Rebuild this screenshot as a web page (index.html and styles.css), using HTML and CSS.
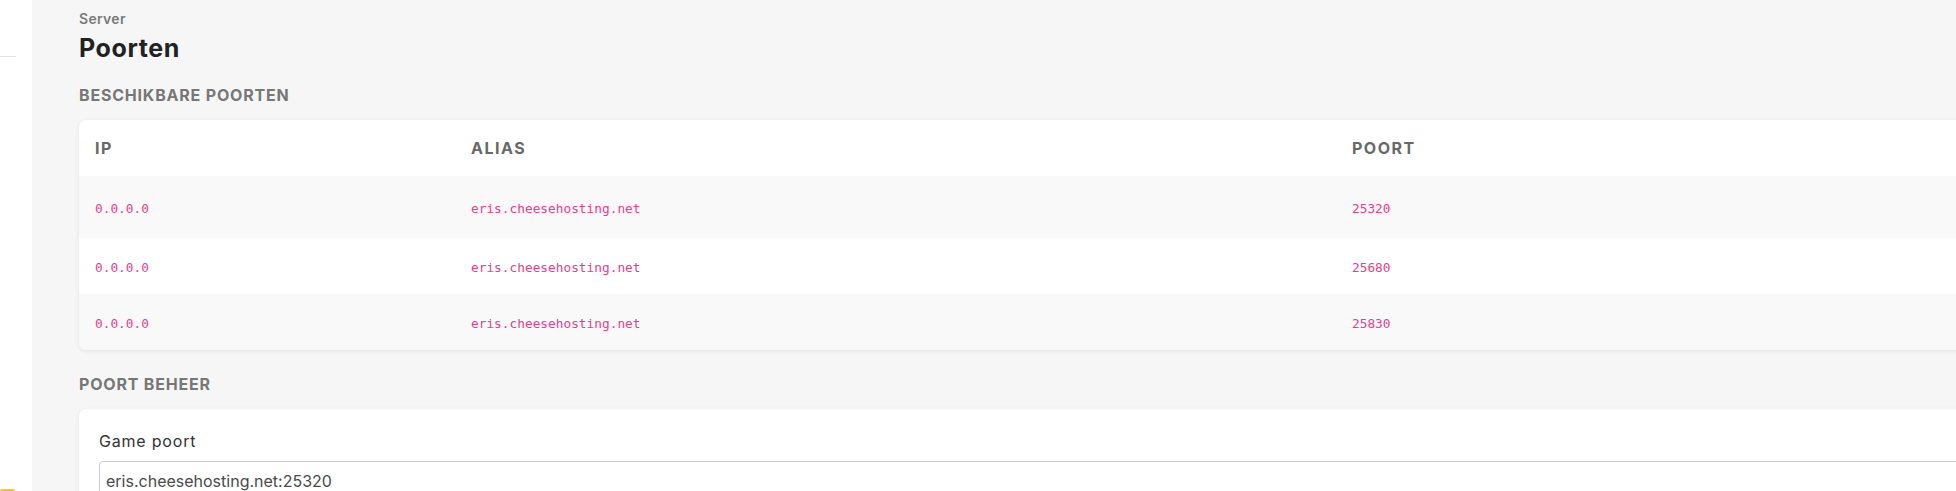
FILE: index.html
```html
<!DOCTYPE html>
<html lang="nl">
<head>
<meta charset="utf-8">
<title>Poorten</title>
<link rel="stylesheet" href="styles.css">
</head>
<body>
<div class="layout">
  <aside class="sidebar">
    <div class="sb-top"></div>
    <div class="sb-badge"></div>
  </aside>
  <main class="main">
    <div class="content">
      <div class="eyebrow">Server</div>
      <h1 class="title">Poorten</h1>
      <h2 class="section-title">BESCHIKBARE POORTEN</h2>
      <div class="card">
        <table class="ports">
          <colgroup><col class="c-ip"><col class="c-alias"><col class="c-port"></colgroup>
          <thead>
            <tr><th>IP</th><th>ALIAS</th><th>POORT</th></tr>
          </thead>
          <tbody>
            <tr class="first"><td><code>0.0.0.0</code></td><td><code>eris.cheesehosting.net</code></td><td><code>25320</code></td></tr>
            <tr><td><code>0.0.0.0</code></td><td><code>eris.cheesehosting.net</code></td><td><code>25680</code></td></tr>
            <tr><td><code>0.0.0.0</code></td><td><code>eris.cheesehosting.net</code></td><td><code>25830</code></td></tr>
          </tbody>
        </table>
      </div>
      <h2 class="section-title second">POORT BEHEER</h2>
      <div class="card form-card">
        <label class="field-label" for="gp">Game poort</label>
        <input class="field-input" id="gp" type="text" value="eris.cheesehosting.net:25320" readonly>
      </div>
    </div>
  </main>
</div>
</body>
</html>
```

FILE: styles.css
```css
* { box-sizing: border-box; }
html, body { margin: 0; padding: 0; }
body {
  font-family: Inter, "Noto Sans", "Liberation Sans", sans-serif;
  background: #f6f6f6;
  overflow: hidden;
  height: 491px;
}
.layout {
  display: flex;
  height: 491px;
}
.sidebar {
  width: 32px;
  flex: 0 0 32px;
  background: #ffffff;
  display: flex;
  flex-direction: column;
  height: 491px;
}
.sb-top {
  width: 16px;
  height: 57px;
  border-bottom: 1px solid #e3e3e3;
}
.sb-badge {
  margin-top: auto;
  width: 15px;
  height: 2px;
  background: #f7c325;
  border-radius: 3px 3px 0 0;
}
.main {
  flex: 1;
  background: #f6f6f6;
  padding-left: 47px;
  overflow: hidden;
}
.content {
  width: 1920px;
  padding-top: 11px;
}
.eyebrow {
  font-size: 14px;
  font-weight: 600;
  color: #7a7a7a;
  line-height: 16px;
  letter-spacing: 0.3px;
}
.title {
  margin: 6px 0 0;
  font-size: 25px;
  font-weight: 700;
  color: #222222;
  line-height: 30px;
  letter-spacing: 0.6px;
}
.section-title {
  margin: 22px 0 0;
  font-size: 16px;
  font-weight: 700;
  color: #777777;
  line-height: 20px;
  letter-spacing: 0.8px;
}
.section-title.second { margin-top: 24px; }
.card {
  margin-top: 15px;
  background: #ffffff;
  border-radius: 7px;
  box-shadow: 0 1px 4px rgba(0,0,0,0.08);
  overflow: hidden;
}
.ports {
  width: 100%;
  border-collapse: collapse;
  table-layout: fixed;
}
.c-ip { width: 376px; }
.c-alias { width: 881px; }
.ports th {
  text-align: left;
  height: 56px;
  padding: 0 16px;
  font-size: 16px;
  font-weight: 700;
  color: #686868;
  letter-spacing: 1.5px;
}
.ports td {
  height: 56px;
  padding: 0 16px;
}
.ports tr.first td { height: 62px; }
.ports tbody tr:nth-child(odd) { background: #f9f9f9; }
code {
  font-family: "DejaVu Sans Mono", "Liberation Mono", monospace;
  font-size: 12.8px;
  color: #e83e8c;
}
.form-card {
  padding: 20px 20px 20px;
  display: flex;
  flex-direction: column;
}
.field-label {
  font-size: 16px;
  font-weight: 400;
  color: #333333;
  line-height: 24px;
  margin-bottom: 8px;
  letter-spacing: 0.8px;
}
.field-input {
  font-family: inherit;
  font-size: 16px;
  color: #4a4a4a;
  height: 40px;
  padding: 0 6px;
  border: 1px solid #cfcbd6;
  border-radius: 4px;
  background: #fff;
  outline: none;
}
```
